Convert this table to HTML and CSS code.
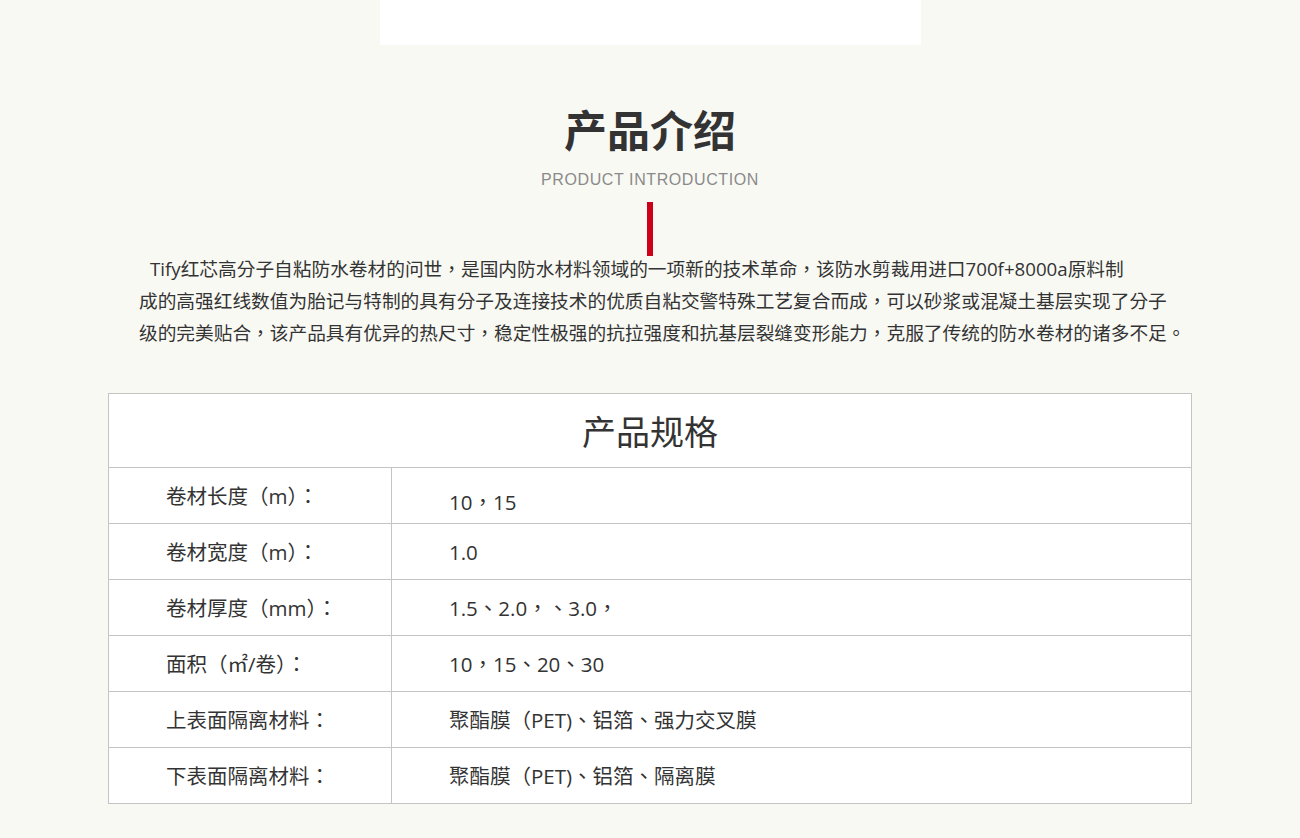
FILE: index.html
```html
<!DOCTYPE html>
<html>
<head>
<meta charset="utf-8">
<title>产品介绍</title>
<link rel="stylesheet" href="styles.css">
</head>
<body>
<div class="top-box"></div>
<section class="intro">
  <h2 class="intro-title">产品介绍</h2>
  <p class="intro-sub">PRODUCT INTRODUCTION</p>
  <div class="intro-bar"></div>
  <p class="intro-text">Tify红芯高分子自粘防水卷材的问世，是国内防水材料领域的一项新的技术革命，该防水剪裁用进口700f+8000a原料制<br>成的高强红线数值为胎记与特制的具有分子及连接技术的优质自粘交警特殊工艺复合而成，可以砂浆或混凝土基层实现了分子<br>级的完美贴合，该产品具有优异的热尺寸，稳定性极强的抗拉强度和抗基层裂缝变形能力，克服了传统的防水卷材的诸多不足。</p>
  <table class="spec">
    <thead>
      <tr class="spec-head-row"><th colspan="2" class="spec-head">产品规格</th></tr>
    </thead>
    <tbody>
      <tr><td class="spec-label">卷材长度（m）：</td><td class="spec-value spec-value-low">10，15</td></tr>
      <tr><td class="spec-label">卷材宽度（m）：</td><td class="spec-value">1.0</td></tr>
      <tr><td class="spec-label">卷材厚度（mm）：</td><td class="spec-value">1.5、2.0，、3.0，</td></tr>
      <tr><td class="spec-label">面积（㎡/卷）：</td><td class="spec-value">10，15、20、30</td></tr>
      <tr><td class="spec-label">上表面隔离材料：</td><td class="spec-value">聚酯膜（PET)、铝箔、强力交叉膜</td></tr>
      <tr><td class="spec-label">下表面隔离材料：</td><td class="spec-value">聚酯膜（PET)、铝箔、隔离膜</td></tr>
    </tbody>
  </table>
</section>
</body>
</html>
```

FILE: styles.css
```css
html, body {
  margin: 0;
  padding: 0;
}
body {
  background: #f9f9f4;
  color: #333;
  font-family: "Open Sans", "Noto Sans CJK TC", sans-serif;
}
.top-box {
  width: 541px;
  height: 45px;
  margin: 0 auto;
  background: #fff;
}
.intro {
  width: 1084px;
  margin: 0 auto;
  display: flex;
  flex-direction: column;
  align-items: center;
}
.intro-title {
  margin: 58px 0 0;
  font-family: "Noto Sans CJK SC", sans-serif;
  font-size: 43px;
  font-weight: bold;
  line-height: 50px;
  color: #333;
}
.intro-sub {
  margin: 17px 0 0;
  font-family: "Liberation Sans", Arial, sans-serif;
  font-size: 16px;
  line-height: 20px;
  color: #8a8a8a;
  letter-spacing: 0.6px;
}
.intro-bar {
  width: 6px;
  height: 54px;
  margin-top: 12px;
  background: #cc0018;
}
.intro-text {
  align-self: stretch;
  margin: -3px 0 0;
  padding: 0 0 0 31px;
  font-size: 18.7px;
  line-height: 32px;
  text-indent: 11px;
  color: #333;
  white-space: nowrap;
}
.spec {
  width: 1084px;
  margin-top: 44px;
  border-collapse: collapse;
  background: #fff;
  border: 1px solid #c4c4c4;
}
.spec-head-row {
  height: 74px;
}
.spec-head {
  padding: 0;
  font-family: "Noto Sans CJK SC", sans-serif;
  font-size: 34px;
  font-weight: normal;
  color: #333;
  border-bottom: 1px solid #c4c4c4;
}
.spec tbody tr {
  height: 56px;
}
.spec td {
  padding: 0 0 0 57px;
  font-size: 20.5px;
  line-height: 28px;
  color: #333;
  border-bottom: 1px solid #c4c4c4;
}
.spec-label {
  width: 225px;
  border-right: 1px solid #c4c4c4;
}
.spec td.spec-value-low {
  vertical-align: bottom;
  padding-bottom: 7px;
}
```
